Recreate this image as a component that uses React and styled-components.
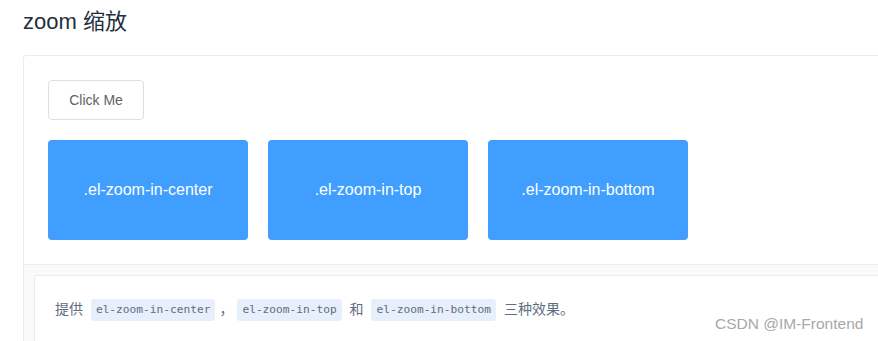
import React from 'react';
import styled, { createGlobalStyle } from 'styled-components';

const GlobalStyle = createGlobalStyle`
  html, body {
    margin: 0;
    padding: 0;
    background: #fff;
    overflow: hidden;
  }
  body {
    font-family: "Liberation Sans", "Noto Sans CJK SC", sans-serif;
  }
`;

const Page = styled.div`
  position: relative;
  width: 878px;
  height: 341px;
  padding-left: 23px;
  box-sizing: border-box;
  overflow: hidden;
`;

const Title = styled.h3`
  margin: 0;
  padding-top: 7px;
  height: 55px;
  box-sizing: border-box;
  font-size: 22px;
  font-weight: 400;
  line-height: 30px;
  color: #1f2f3d;
`;

const DemoBlock = styled.div`
  width: 900px;
  border: 1px solid #ebebeb;
  border-radius: 3px;
`;

const Source = styled.div`
  padding: 24px;
`;

const Button = styled.button`
  display: block;
  width: 96px;
  height: 40px;
  padding: 0;
  border: 1px solid #dcdfe6;
  border-radius: 4px;
  background: #fff;
  color: #606266;
  font-family: "Liberation Sans", sans-serif;
  font-size: 14px;
  cursor: pointer;
`;

const BoxRow = styled.div`
  display: flex;
  gap: 20px;
  margin-top: 20px;
`;

const TransitionBox = styled.div`
  width: 200px;
  height: 100px;
  border-radius: 4px;
  background: #409eff;
  color: #fff;
  font-size: 16px;
  display: flex;
  align-items: center;
  justify-content: center;
`;

const Meta = styled.div`
  border-top: 1px solid #eaeefb;
  background: #fafafa;
  padding: 10px;
  height: 120px;
`;

const Description = styled.div`
  background: #fff;
  border: 1px solid #ebebeb;
  border-radius: 3px;
  padding: 22px 20px;
  font-size: 14px;
  line-height: 22px;
  color: #5e6d82;
  height: 100%;
  box-sizing: border-box;
`;

const Code = styled.code`
  display: inline-block;
  margin: 0 4px;
  padding: 2px 5px;
  height: 18px;
  line-height: 18px;
  vertical-align: middle;
  font-family: "DejaVu Sans Mono", monospace;
  font-size: 11.2px;
  color: #5e6d82;
  background: #e6effb;
  border-radius: 3px;
`;

const Watermark = styled.div`
  position: absolute;
  left: 715px;
  top: 315px;
  font-family: "Liberation Sans", sans-serif;
  font-size: 15.5px;
  color: #a8a8a8;
`;

const boxes = ['.el-zoom-in-center', '.el-zoom-in-top', '.el-zoom-in-bottom'];

export default function App() {
  return (
    <Page>
      <GlobalStyle />
      <Title>zoom 缩放</Title>
      <DemoBlock>
        <Source>
          <Button>Click Me</Button>
          <BoxRow>
            {boxes.map((b) => (
              <TransitionBox key={b}>{b}</TransitionBox>
            ))}
          </BoxRow>
        </Source>
        <Meta>
          <Description>
            提供 <Code>el-zoom-in-center</Code>，<Code>el-zoom-in-top</Code> 和{' '}
            <Code>el-zoom-in-bottom</Code> 三种效果。
          </Description>
        </Meta>
      </DemoBlock>
      <Watermark>CSDN @IM-Frontend</Watermark>
    </Page>
  );
}
